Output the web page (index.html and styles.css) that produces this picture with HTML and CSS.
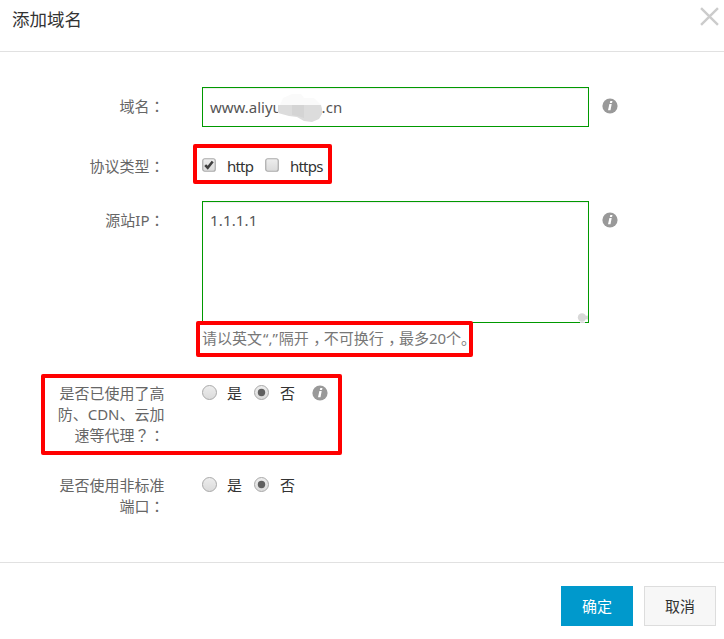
FILE: index.html
```html
<!DOCTYPE html>
<html lang="zh-CN">
<head>
<meta charset="utf-8">
<title>添加域名</title>
<link rel="stylesheet" href="styles.css">
</head>
<body>
<svg width="0" height="0" class="defs">
  <defs>
    <linearGradient id="face" x1="0" y1="0" x2="0" y2="1"><stop offset="0" stop-color="#eee"/><stop offset="1" stop-color="#dadada"/></linearGradient>
    <symbol id="info" viewBox="0 0 16 16"><circle cx="8" cy="8" r="7.6" fill="#999"/><path d="M8.3 3h2.2l-.5 1.900H7.800zM7.400 5.900h2.300L8.500 12.300H6z" fill="#fff"/></symbol>
    <symbol id="radio" viewBox="0 0 16 16"><circle cx="7.500" cy="7.500" r="7" fill="url(#face)" stroke="#aaa"/></symbol>
    <symbol id="radio-on" viewBox="0 0 16 16"><circle cx="7.500" cy="7.500" r="7" fill="url(#face)" stroke="#aaa"/><circle cx="7.500" cy="7.500" r="3.700" fill="#606060"/></symbol>
    <symbol id="check" viewBox="0 0 14 14"><rect x=".75" y=".75" width="12.5" height="12.5" rx="2" fill="url(#face)" stroke="#aaa" stroke-width="1.2"/></symbol>
    <symbol id="check-on" viewBox="0 0 14 14"><rect x=".75" y=".75" width="12.5" height="12.5" rx="2" fill="url(#face)" stroke="#aaa" stroke-width="1.2"/><path d="M3.2 7.2l2.5 2.5 5-6.2" fill="none" stroke="#404040" stroke-width="2.6"/></symbol>
  </defs>
</svg>
<div class="dialog">
  <header class="head">
    <h1>添加域名</h1>
    <svg class="close" viewBox="0 0 18 18"><path d="M1 1l16 16M17 1L1 17" stroke="#ccc" stroke-width="2.300" fill="none"/></svg>
  </header>
  <main class="form">
    <div class="row row-domain">
      <div class="label">域名<span class="colon" lang="zh-TW">：</span></div>
      <div class="input"><span class="dom-a">www.aliyun</span><span class="dom-b">e.cn</span>
        <svg class="smudge" viewBox="0 0 46 28"><path d="M2 11L5 4 14 0h9l3 4h10l7 7z" fill="#fafafa"/><path d="M0 11h43l1 4v5l-3 5-7 3-8-1-7-4-8-1-11-3z" fill="#dcdcdc"/><path d="M14 11h12v13l-6-2-6-1z" fill="#d4d4d4"/></svg>
      </div>
      <svg class="info"><use href="#info"/></svg>
    </div>
    <div class="row row-protocol">
      <div class="label">协议类型<span class="colon" lang="zh-TW">：</span></div>
      <div class="options protocol">
        <svg class="check"><use href="#check-on"/></svg><span class="opt http">http</span>
        <svg class="check"><use href="#check"/></svg><span class="opt https">https</span>
        <div class="mark mark-protocol"></div>
      </div>
    </div>
    <div class="row row-ip">
      <div class="label">源站IP<span class="colon" lang="zh-TW">：</span></div>
      <div class="field">
        <div class="textarea">1.1.1.1<svg class="grip" viewBox="0 0 12 10"><circle cx="6" cy="4.500" r="4.200" fill="#d8d8d8"/><path d="M9 3l3-.5v4L9 6zM4 9h5v1H4z" fill="#d8d8d8"/></svg></div>
        <div class="hint"><span class="hint-text">请以英文<span class="quote">“,”</span>隔开<span class="comma">，</span>不可换行<span class="comma">，</span>最多20个。</span><div class="mark mark-hint"></div></div>
      </div>
      <svg class="info"><use href="#info"/></svg>
    </div>
    <div class="row row-proxy">
      <div class="label">是否已使用了高<br>防、CDN、云加<br>速等代理<span class="colon" lang="zh-TW">？：</span></div>
      <div class="options">
        <svg class="radio"><use href="#radio"/></svg><span class="opt yes">是</span>
        <svg class="radio"><use href="#radio-on"/></svg><span class="opt no">否</span>
        <svg class="info"><use href="#info"/></svg>
      </div>
      <div class="mark mark-proxy"></div>
    </div>
    <div class="row row-port">
      <div class="label">是否使用非标准<br>端口<span class="colon" lang="zh-TW">：</span></div>
      <div class="options">
        <svg class="radio"><use href="#radio"/></svg><span class="opt yes">是</span>
        <svg class="radio"><use href="#radio-on"/></svg><span class="opt no">否</span>
      </div>
    </div>
  </main>
  <footer class="foot">
    <button class="btn primary">确定</button>
    <button class="btn">取消</button>
  </footer>
</div>
</body>
</html>
```
FILE: styles.css
```css
* { box-sizing: border-box; }
body {
  margin: 0;
  background: #fff;
  color: #333;
  font: 15px/21px "Noto Sans", "Noto Sans CJK SC", sans-serif;
}
svg { display: block; flex: none; }
.defs { position: absolute; }
.dialog { width: 724px; height: 639px; display: flex; flex-direction: column; overflow: hidden; }
.head {
  height: 52px;
  padding: 7px 5px 0 12px;
  border-bottom: 1px solid #e1e1e1;
  display: flex;
  justify-content: space-between;
}
.head h1 { margin: -1px 0 0; font-size: 17.5px; line-height: 26px; font-weight: 400; }
.close { width: 19px; height: 19px; }
.form { height: 510px; padding-top: 35px; }
.row { position: relative; display: flex; align-items: flex-start; }
.label { width: 164.5px; margin-right: 37.5px; text-align: right; color: #666; white-space: nowrap; }
.colon { font-family: "Noto Sans CJK TC", sans-serif; line-height: 1; }
.info { width: 16px; height: 16px; }
.row > .info { margin: 10.5px 0 0 13px; }
.row-domain { height: 40px; }
.row-domain .label { padding-top: 9px; }
.input, .textarea {
  position: relative;
  width: 387px;
  border: 1px solid #090;
  box-shadow: inset 0 1px 1px rgba(0, 0, 0, .075);
  color: #555;
  padding: 9px 7px;
}
.input { height: 40px; display: flex; }
.dom-a { width: 103px; }
.dom-b { letter-spacing: .1px; }
.smudge { position: absolute; left: 75px; top: 6px; width: 46px; height: 28px; }
.row-protocol { height: 56px; margin-top: 18px; }
.row-protocol .label { padding-top: 11px; }
.options { display: flex; align-items: center; height: 21px; position: relative; }
.protocol { margin-top: 11px; }
.check { width: 14px; height: 14px; margin-top: -3px; }
.http { width: 38px; margin-left: 11px; letter-spacing: -.8px; }
.https { margin-left: 11px; letter-spacing: -.8px; }
.row-ip { height: 182px; }
.row-ip .label { padding-top: 9px; }
.textarea { height: 122px; padding-top: 8px; letter-spacing: .15px; }
.grip { position: absolute; right: 0; bottom: -1px; width: 12px; height: 10px; }
.hint { position: relative; color: #777; margin-top: 4px; white-space: nowrap; }
.quote { margin: 0 1px; }
.comma { font-family: "Noto Sans CJK SC", sans-serif; font-feature-settings: "halt"; padding: 0 3px 0 4.5px; }
.row-proxy { height: 92px; }
.row-proxy, .row-port { top: -.5px; }
.radio { width: 16px; height: 16px; margin-top: -1px; }
.row-proxy .info { margin-top: -1px; }
.yes { margin: 0 12px 0 9px; }
.no { margin: 0 17px 0 10px; }
.mark { position: absolute; border: 4px solid #f00; border-radius: 2px; }
.mark-protocol { left: -9.5px; top: -12px; width: 139.5px; height: 40px; }
.mark-hint { left: -6px; top: -6px; width: 277px; height: 36px; }
.mark-proxy { left: 41px; top: -9px; width: 301px; height: 81px; }
.foot { height: 77px; border-top: 1px solid #e1e1e1; padding: 23px 8px 0; display: flex; justify-content: flex-end; gap: 11px; }
.btn {
  width: 72px;
  height: 40px;
  border: 1px solid #ddd;
  background: #f7f7f7;
  color: #333;
  font: inherit;
  padding: 0;
}
.primary { background: #09c; border-color: #09c; color: #fff; }
```
